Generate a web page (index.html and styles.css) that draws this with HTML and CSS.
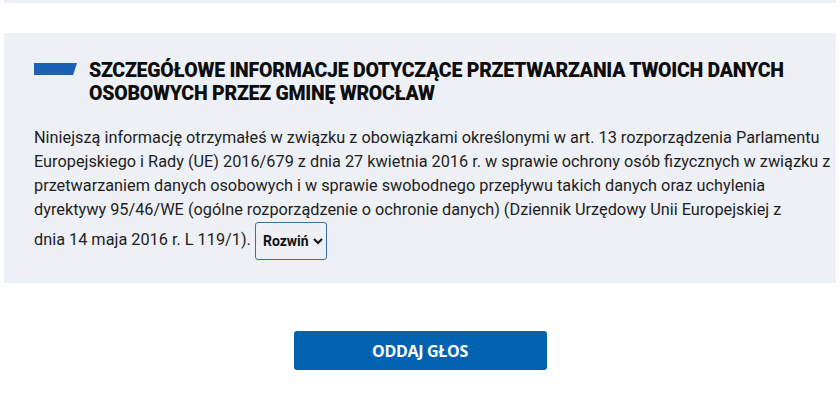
FILE: index.html
```html
<!DOCTYPE html>
<html lang="pl">

<head>
    <meta charset="UTF-8">
    <title>Głosowanie</title>
    <link rel="stylesheet" href="styles.css">
</head>

<body>
    <div class="strip"></div>
    <div class="info">
        <div class="info-head">
            <span class="mark"></span>
            <h2>Szczegółowe informacje dotyczące przetwarzania twoich danych osobowych przez Gminę Wrocław</h2>
        </div>
        <p class="info-text">Niniejszą informację otrzymałeś w związku z obowiązkami określonymi w art. 13 rozporządzenia Parlamentu<br>
            Europejskiego i Rady (UE) 2016/679 z dnia 27 kwietnia 2016 r. w sprawie ochrony osób fizycznych w związku z<br>
            przetwarzaniem danych osobowych i w sprawie swobodnego przepływu takich danych oraz uchylenia<br>
            dyrektywy 95/46/WE (ogólne rozporządzenie o ochronie danych) (Dziennik Urzędowy Unii Europejskiej z<br>
            dnia 14 maja 2016 r. L 119/1). <select class="more">
                <option>Rozwiń</option>
            </select></p>
    </div>
    <div class="actions">
        <button class="btn">Oddaj głos</button>
    </div>
</body>

</html>
```

FILE: styles.css
```css
body {
    margin: 0;
    background: #fff;
    font-family: Roboto, "Noto Sans", sans-serif;
    color: #1b1b1b;
}

.strip {
    height: 3px;
    margin: 0 4px;
    background: #edf0f5;
}

.info {
    margin: 30px 4px 0;
    padding: 26px 10px 23px 30px;
    background: #edf0f5;
}

.info-head {
    display: flex;
    align-items: flex-start;
    gap: 12px;
}

.mark {
    flex: none;
    width: 43px;
    height: 12px;
    margin-top: 4px;
    background: #1b62b5;
    clip-path: polygon(0 0, 100% 0, 91% 100%, 0 100%);
}

.info-head h2 {
    margin: 0;
    font-size: 19.5px;
    font-weight: 900;
    line-height: 23px;
    letter-spacing: -0.25px;
    text-transform: uppercase;
    color: #0d0d0d;
}

.info-text {
    margin: 21px 0 0;
    font-size: 16.3px;
    line-height: 24px;
    white-space: nowrap;
    color: #1e1e1e;
}

.more {
    box-sizing: border-box;
    height: 38px;
    padding: 0 1px 0 3px;
    font-family: Roboto, sans-serif;
    font-size: 14px;
    font-weight: bold;
    color: #111;
    background: #edf0f5;
    border: 1px solid #3c6fa6;
    border-radius: 3px;
    vertical-align: middle;
}

.actions {
    display: flex;
    justify-content: center;
    padding-top: 48px;
}

.btn {
    width: 253px;
    height: 39px;
    background: #0062b1;
    color: #fff;
    border: none;
    border-radius: 3px;
    font-family: "Open Sans", sans-serif;
    font-size: 16px;
    font-weight: bold;
    letter-spacing: -0.3px;
    text-transform: uppercase;
    cursor: pointer;
}
```
